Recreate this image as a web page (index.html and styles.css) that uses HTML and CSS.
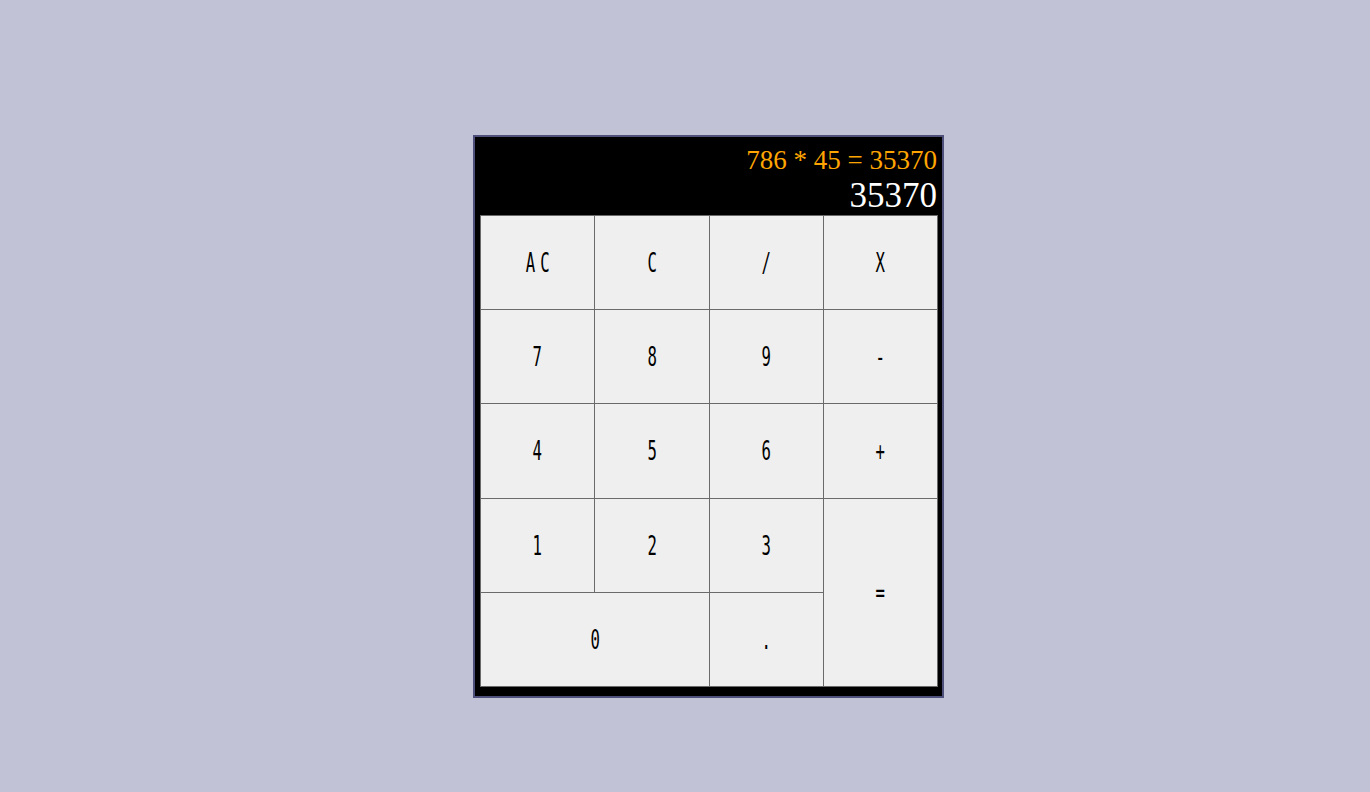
FILE: index.html
```html
<!DOCTYPE html>
<html>
<head>
<meta charset="utf-8">
<link rel="stylesheet" href="styles.css">
</head>
<body>
<div class="page">
  <div class="calc">
    <div class="display">
      <div class="expr">786 * 45 = 35370</div>
      <div class="result">35370</div>
    </div>
    <div class="keys">
      <button class="key"><span class="lbl wide">AC</span></button>
      <button class="key"><span class="lbl">C</span></button>
      <button class="key"><span class="lbl">/</span></button>
      <button class="key"><span class="lbl">X</span></button>
      <button class="key"><span class="lbl">7</span></button>
      <button class="key"><span class="lbl">8</span></button>
      <button class="key"><span class="lbl">9</span></button>
      <button class="key"><span class="lbl">-</span></button>
      <button class="key"><span class="lbl">4</span></button>
      <button class="key"><span class="lbl">5</span></button>
      <button class="key"><span class="lbl">6</span></button>
      <button class="key"><span class="lbl">+</span></button>
      <button class="key"><span class="lbl">1</span></button>
      <button class="key"><span class="lbl">2</span></button>
      <button class="key"><span class="lbl">3</span></button>
      <button class="key equals"><span class="lbl">=</span></button>
      <button class="key zero"><span class="lbl">0</span></button>
      <button class="key"><span class="lbl">.</span></button>
    </div>
  </div>
</div>
</body>
</html>
```
FILE: styles.css
```css
html, body {
  margin: 0;
  padding: 0;
}
body {
  background: #c2c2d7;
  width: 1370px;
  height: 792px;
  overflow: hidden;
}
.page {
  padding: 135px 0 0 473px;
}
.calc {
  width: 458px;
  border: 2px solid #4f4f7c;
  background: #000;
  padding: 8px 4px 9px 5px;
  box-sizing: content-box;
}
.display {
  text-align: right;
  font-family: "Liberation Serif", "Times New Roman", serif;
  padding-right: 1px;
}
.expr {
  color: #ffa500;
  font-size: 27px;
  line-height: 31px;
}
.result {
  color: #fff;
  font-size: 35px;
  line-height: 39px;
}
.keys {
  display: grid;
  grid-template-columns: repeat(4, 1fr);
  grid-template-rows: repeat(5, 1fr);
  gap: 1px;
  padding: 1px;
  background: #6a6a6a;
  height: 472px;
  box-sizing: border-box;
}
.key {
  background: #efefef;
  border: none;
  margin: 0;
  padding: 0;
  display: flex;
  align-items: center;
  justify-content: center;
  font-family: "DejaVu Sans Mono", monospace;
  font-size: 27px;
  color: #000;
}
.lbl {
  display: inline-block;
  transform: scaleX(0.58);
}
.lbl.wide {
  letter-spacing: 9px;
  padding-left: 9px;
}
.equals {
  grid-column: 4;
  grid-row: 4 / span 2;
}
.zero {
  grid-column: 1 / span 2;
}
```
